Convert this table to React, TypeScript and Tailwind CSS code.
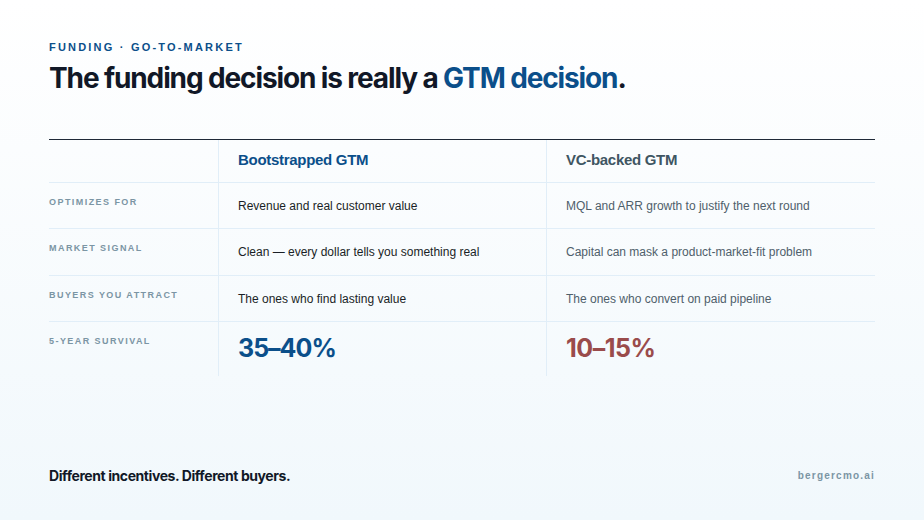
const rows = [
  {
    label: 'Optimizes for',
    boot: 'Revenue and real customer value',
    vc: 'MQL and ARR growth to justify the next round',
  },
  {
    label: 'Market signal',
    boot: 'Clean — every dollar tells you something real',
    vc: 'Capital can mask a product-market-fit problem',
  },
  {
    label: 'Buyers you attract',
    boot: 'The ones who find lasting value',
    vc: 'The ones who convert on paid pipeline',
  },
];

const sans = "font-['Liberation_Sans',Arial,sans-serif]";

export default function App() {
  return (
    <div className="w-[924px] h-[520px] bg-gradient-to-b from-white to-[#f1f8fc] px-[49px] pt-[39px] pb-[34px] flex flex-col">
      <div className={`${sans} text-[11px] font-bold tracking-[0.2em] text-[#0b4f8a] uppercase`}>
        Funding · Go-to-market
      </div>
      <h1 className="mt-[4px] font-['Inter',sans-serif] text-[28px] font-bold tracking-[-0.04em] text-[#111827] leading-[36px]">
        The funding decision is really a <span className="text-[#0b4f8a]">GTM decision</span>.
      </h1>

      <div className={`${sans} mt-[43px] border-t border-[#1f2937] grid grid-cols-[170px_328px_328px]`}>
        <div className="h-[43px] border-r border-b border-[#e1eef8]" />
        <div className="h-[43px] border-r border-b border-[#e1eef8] pl-[19px] flex items-center">
          <span className="text-[15px] font-bold tracking-[-0.02em] text-[#0b4f8a]">Bootstrapped GTM</span>
        </div>
        <div className="h-[43px] border-b border-[#e1eef8] pl-[19px] flex items-center">
          <span className="text-[15px] font-bold tracking-[-0.02em] text-[#3f5663]">VC-backed GTM</span>
        </div>

        {rows.map((r) => (
          <div key={r.label} className="contents">
            <div className="h-[46.5px] border-r border-b border-[#e1eef8] pt-[13px] text-[9px] font-bold uppercase tracking-[0.16em] text-[#7b95a4]">
              {r.label}
            </div>
            <div className="h-[46.5px] border-r border-b border-[#e1eef8] pl-[19px] pt-[14px] text-[12px] text-[#1a1f26]">
              {r.boot}
            </div>
            <div className="h-[46.5px] border-b border-[#e1eef8] pl-[19px] pt-[14px] text-[12px] text-[#4f606b]">
              {r.vc}
            </div>
          </div>
        ))}

        <div className="h-[54px] border-r border-[#e1eef8] pt-[13px] text-[9px] font-bold uppercase tracking-[0.16em] text-[#7b95a4]">
          5-year survival
        </div>
        <div className="h-[54px] border-r border-[#e1eef8] pl-[19px] pt-[11px] font-['Inter',sans-serif] text-[25px] font-bold leading-[30px] tracking-[-0.04em] text-[#0b4f8a]">
          35–40%
        </div>
        <div className="h-[54px] pl-[19px] pt-[11px] font-['Inter',sans-serif] text-[25px] font-bold leading-[30px] tracking-[-0.02em] text-[#9a4b4b]">
          10–15%
        </div>
      </div>

      <div className="mt-auto flex items-center justify-between">
        <span className="font-['Inter',sans-serif] text-[14px] font-bold tracking-[-0.03em] text-[#111827]">
          Different incentives. Different buyers.
        </span>
        <span className={`${sans} text-[10px] font-bold tracking-[0.12em] text-[#7b95a4]`}>bergercmo.ai</span>
      </div>
    </div>
  );
}
